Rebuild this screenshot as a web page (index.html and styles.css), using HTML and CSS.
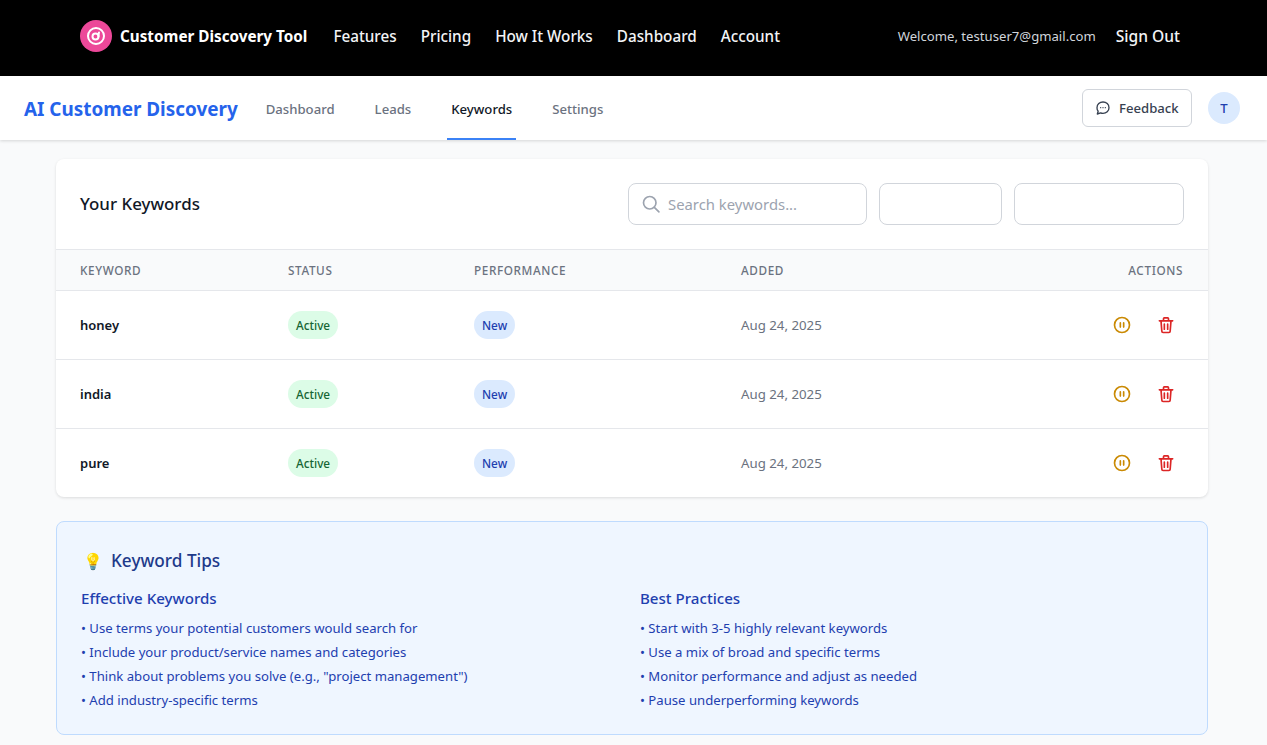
FILE: index.html
```html
<!DOCTYPE html>
<html lang="en">

<head>
    <meta charset="UTF-8" />
    <title>Keywords</title>
    <link rel="stylesheet" href="styles.css">
</head>

<body>
    <header class="site-bar">
        <div class="site-left">
            <a class="brand">
                <span class="brand-icon">
                    <svg width="24" height="24" viewBox="0 0 24 24" fill="none" stroke="#fff" stroke-width="2" stroke-linecap="round">
                        <circle cx="12" cy="12" r="8" />
                        <circle cx="11.500" cy="12.500" r="3" />
                        <path d="M14.500 12.500c0-1.500.2-3 .5-4" />
                    </svg>
                </span>
                Customer Discovery Tool
            </a>
            <nav class="site-nav">
                <a>Features</a>
                <a>Pricing</a>
                <a>How It Works</a>
                <a>Dashboard</a>
                <a>Account</a>
            </nav>
        </div>
        <div class="site-right">
            <span class="welcome">Welcome, testuser7@gmail.com</span>
            <a class="sign-out">Sign Out</a>
        </div>
    </header>

    <div class="app-bar">
        <div class="app-left">
            <h1 class="app-title">AI Customer Discovery</h1>
            <nav class="app-tabs">
                <a class="tab">Dashboard</a>
                <a class="tab">Leads</a>
                <a class="tab tab-active">Keywords</a>
                <a class="tab">Settings</a>
            </nav>
        </div>
        <div class="app-right">
            <button class="feedback" type="button">
                <svg width="16" height="16" viewBox="0 0 24 24" fill="none" stroke="#374151" stroke-width="2" stroke-linecap="round" stroke-linejoin="round">
                    <path d="M12 3c5 0 9 3.600 9 8.500S17 20 12 20c-1.300 0-2.500-.2-3.600-.7L3.500 21l1.200-4.200A8 8 0 0 1 3 11.500C3 6.600 7 3 12 3z" />
                    <path d="M8.500 11.500h.01M12 11.500h.01M15.500 11.500h.01" />
                </svg>
                Feedback
            </button>
            <span class="avatar">T</span>
        </div>
    </div>

    <main class="content">
        <section class="card">
            <div class="card-head">
                <h2 class="card-title">Your Keywords</h2>
                <div class="filters">
                    <label class="search">
                        <svg width="20" height="20" viewBox="0 0 24 24" fill="none" stroke="#9ca3af" stroke-width="2" stroke-linecap="round">
                            <circle cx="10.500" cy="10.500" r="7.500" />
                            <path d="M16 16l5.500 5.500" />
                        </svg>
                        <input type="text" placeholder="Search keywords..." />
                    </label>
                    <div class="select-box select-status"></div>
                    <div class="select-box select-sort"></div>
                </div>
            </div>
            <table class="kw-table">
                <colgroup>
                    <col class="col-keyword">
                    <col class="col-status">
                    <col class="col-perf">
                    <col class="col-added">
                    <col>
                </colgroup>
                <thead>
                    <tr>
                        <th>Keyword</th>
                        <th>Status</th>
                        <th>Performance</th>
                        <th>Added</th>
                        <th class="th-actions">Actions</th>
                    </tr>
                </thead>
                <tbody>
                    <tr>
                        <td class="kw-name">honey</td>
                        <td><span class="pill pill-green">Active</span></td>
                        <td><span class="pill pill-blue">New</span></td>
                        <td class="kw-date">Aug 24, 2025</td>
                        <td class="kw-actions">
                            <button class="icon-btn" type="button">
                                <svg width="20" height="20" viewBox="0 0 24 24" fill="none" stroke="#ca8a04" stroke-width="2" stroke-linecap="round"><circle cx="12" cy="12" r="9" /><path d="M10 9.500v5M14 9.500v5" /></svg>
                            </button>
                            <button class="icon-btn" type="button">
                                <svg width="20" height="20" viewBox="0 0 24 24" fill="none" stroke="#dc2626" stroke-width="2" stroke-linecap="round" stroke-linejoin="round"><path d="M4 7h16M9 7V4.500A1 1 0 0 1 10 3.500h4a1 1 0 0 1 1 1V7M6 7l1 12.500A1.500 1.500 0 0 0 8.500 21h7a1.500 1.500 0 0 0 1.500-1.500L18 7M10 11v6M14 11v6" /></svg>
                            </button>
                        </td>
                    </tr>
                    <tr>
                        <td class="kw-name">india</td>
                        <td><span class="pill pill-green">Active</span></td>
                        <td><span class="pill pill-blue">New</span></td>
                        <td class="kw-date">Aug 24, 2025</td>
                        <td class="kw-actions">
                            <button class="icon-btn" type="button">
                                <svg width="20" height="20" viewBox="0 0 24 24" fill="none" stroke="#ca8a04" stroke-width="2" stroke-linecap="round"><circle cx="12" cy="12" r="9" /><path d="M10 9.500v5M14 9.500v5" /></svg>
                            </button>
                            <button class="icon-btn" type="button">
                                <svg width="20" height="20" viewBox="0 0 24 24" fill="none" stroke="#dc2626" stroke-width="2" stroke-linecap="round" stroke-linejoin="round"><path d="M4 7h16M9 7V4.500A1 1 0 0 1 10 3.500h4a1 1 0 0 1 1 1V7M6 7l1 12.500A1.500 1.500 0 0 0 8.500 21h7a1.500 1.500 0 0 0 1.500-1.500L18 7M10 11v6M14 11v6" /></svg>
                            </button>
                        </td>
                    </tr>
                    <tr>
                        <td class="kw-name">pure</td>
                        <td><span class="pill pill-green">Active</span></td>
                        <td><span class="pill pill-blue">New</span></td>
                        <td class="kw-date">Aug 24, 2025</td>
                        <td class="kw-actions">
                            <button class="icon-btn" type="button">
                                <svg width="20" height="20" viewBox="0 0 24 24" fill="none" stroke="#ca8a04" stroke-width="2" stroke-linecap="round"><circle cx="12" cy="12" r="9" /><path d="M10 9.500v5M14 9.500v5" /></svg>
                            </button>
                            <button class="icon-btn" type="button">
                                <svg width="20" height="20" viewBox="0 0 24 24" fill="none" stroke="#dc2626" stroke-width="2" stroke-linecap="round" stroke-linejoin="round"><path d="M4 7h16M9 7V4.500A1 1 0 0 1 10 3.500h4a1 1 0 0 1 1 1V7M6 7l1 12.500A1.500 1.500 0 0 0 8.500 21h7a1.500 1.500 0 0 0 1.500-1.500L18 7M10 11v6M14 11v6" /></svg>
                            </button>
                        </td>
                    </tr>
                </tbody>
            </table>
        </section>

        <section class="tips">
            <h3 class="tips-title"><span class="tips-emoji">💡</span>Keyword Tips</h3>
            <div class="tips-grid">
                <div>
                    <h4 class="tips-sub">Effective Keywords</h4>
                    <ul class="tips-list">
                        <li>• Use terms your potential customers would search for</li>
                        <li>• Include your product/service names and categories</li>
                        <li>• Think about problems you solve (e.g., "project management")</li>
                        <li>• Add industry-specific terms</li>
                    </ul>
                </div>
                <div>
                    <h4 class="tips-sub">Best Practices</h4>
                    <ul class="tips-list">
                        <li>• Start with 3-5 highly relevant keywords</li>
                        <li>• Use a mix of broad and specific terms</li>
                        <li>• Monitor performance and adjust as needed</li>
                        <li>• Pause underperforming keywords</li>
                    </ul>
                </div>
            </div>
        </section>
    </main>
</body>

</html>
```

FILE: styles.css
```css
* {
    box-sizing: border-box;
}

body {
    margin: 0;
    background-color: #f9fafb;
    color: #111827;
    font-family: "Noto Sans", "Liberation Sans", sans-serif;
    font-size: 13.15px;
}

h1,
h2,
h3,
h4,
ul {
    margin: 0;
    padding: 0;
}

/* top black bar */
.site-bar {
    display: flex;
    justify-content: space-between;
    align-items: center;
    height: 76px;
    padding: 0 87px 4px 80px;
    background-color: #000;
    color: #fff;
}

.site-left,
.site-right,
.brand,
.site-nav {
    display: flex;
    align-items: center;
}

.brand {
    gap: 8px;
    margin-right: 26px;
    font-size: 15.25px;
    font-weight: 700;
}

.brand-icon {
    display: flex;
    align-items: center;
    justify-content: center;
    width: 32px;
    height: 32px;
    border-radius: 50%;
    background-color: #ec4899;
}

.site-nav {
    gap: 24px;
    font-size: 15.25px;
    font-weight: 500;
    color: #f3f4f6;
}

.site-right {
    gap: 20px;
}

.welcome {
    font-size: 13.15px;
    color: #d1d5db;
}

.sign-out {
    font-size: 15.6px;
    font-weight: 500;
    color: #f3f4f6;
}

/* white app bar */
.app-bar {
    display: flex;
    justify-content: space-between;
    align-items: center;
    height: 64px;
    padding: 0 27px 0 24px;
    background-color: #fff;
    box-shadow: 0 1px 3px rgba(0, 0, 0, 0.15);
}

.app-left,
.app-right,
.app-tabs {
    display: flex;
    align-items: center;
}

.app-left,
.app-tabs {
    height: 100%;
}

.app-title {
    margin-right: 24px;
    padding-top: 2px;
    font-size: 18.9px;
    font-weight: 700;
    color: #2563eb;
}

.tab {
    display: flex;
    align-items: center;
    height: 100%;
    padding: 3px 4px 0;
    margin-right: 32px;
    border-bottom: 2px solid transparent;
    font-size: 13.15px;
    font-weight: 500;
    color: #6b7280;
}

.tab-active {
    border-bottom-color: #3b82f6;
    color: #111827;
}

.app-right {
    gap: 16px;
}

.feedback {
    display: flex;
    align-items: center;
    gap: 8px;
    width: 110px;
    height: 38px;
    padding: 0 12px;
    border: 1px solid #d1d5db;
    border-radius: 6px;
    background-color: #fff;
    font-family: inherit;
    font-size: 13.15px;
    font-weight: 500;
    color: #374151;
}

.feedback svg,
.search svg {
    flex: none;
}

.avatar {
    display: flex;
    align-items: center;
    justify-content: center;
    width: 32px;
    height: 32px;
    border-radius: 50%;
    background-color: #dbeafe;
    font-size: 13.15px;
    font-weight: 500;
    color: #1e40af;
}

/* main content */
.content {
    width: 1152px;
    margin-left: 56px;
    padding-top: 19px;
    padding-bottom: 24px;
}

.card {
    overflow: hidden;
    border-radius: 8px;
    background-color: #fff;
    box-shadow: 0 1px 3px rgba(0, 0, 0, 0.12);
}

.card-head {
    display: flex;
    justify-content: space-between;
    align-items: center;
    height: 90px;
    padding: 0 24px;
}

.card-title {
    margin-bottom: 2px;
    font-size: 16.9px;
    font-weight: 500;
    color: #111827;
}

.filters {
    display: flex;
    gap: 12px;
}

.search {
    display: flex;
    align-items: center;
    gap: 7px;
    width: 239px;
    height: 42px;
    padding: 0 12px;
    border: 1px solid #d1d5db;
    border-radius: 8px;
}

.search input {
    width: 100%;
    border: none;
    outline: none;
    padding: 0;
    font-family: inherit;
    font-size: 14.85px;
    color: #111827;
}

.search input::placeholder {
    color: #9ca3af;
}

.select-box {
    height: 42px;
    border: 1px solid #d1d5db;
    border-radius: 8px;
    background-color: #fff;
}

.select-status {
    width: 123px;
}

.select-sort {
    width: 170px;
}

.kw-table {
    width: 100%;
    border-collapse: collapse;
    table-layout: fixed;
}

.col-keyword {
    width: 232px;
}

.col-status {
    width: 186px;
}

.col-perf {
    width: 267px;
}

.col-added {
    width: 267px;
}

.kw-table th {
    height: 41px;
    padding: 0 24px 0 0;
    border-top: 1px solid #e5e7eb;
    border-bottom: 1px solid #e5e7eb;
    background-color: #f9fafb;
    text-align: left;
    font-size: 11.75px;
    font-weight: 500;
    letter-spacing: 0.6px;
    text-transform: uppercase;
    color: #6b7280;
}

.kw-table th:first-child,
.kw-table td:first-child {
    padding-left: 24px;
}

.kw-table th.th-actions {
    padding-right: 25px;
    text-align: right;
}

.kw-table td {
    height: 69px;
    padding: 0 24px 0 0;
    border-bottom: 1px solid #e5e7eb;
}

.kw-table tr:last-child td {
    height: 68px;
    border-bottom: none;
}

.kw-name {
    font-size: 13px;
    font-weight: 600;
    color: #111827;
}

.kw-date {
    font-size: 13.25px;
    color: #6b7280;
}

.pill {
    display: inline-block;
    height: 28px;
    padding: 0 8px;
    border-radius: 14px;
    font-size: 11.75px;
    font-weight: 500;
    line-height: 28px;
    vertical-align: middle;
}

.pill-green {
    background-color: #dcfce7;
    color: #166534;
}

.pill-blue {
    background-color: #dbeafe;
    color: #1e40af;
}

.kw-actions {
    text-align: right;
}

.icon-btn {
    display: inline-flex;
    margin-left: 21px;
    padding: 0;
    border: none;
    background: none;
    vertical-align: middle;
}

.kw-actions .icon-btn:last-child {
    margin-right: 8px;
}

/* tips box */
.tips {
    height: 214px;
    margin-top: 24px;
    padding: 24px;
    border: 1px solid #bfdbfe;
    border-radius: 8px;
    background-color: #eff6ff;
}

.tips-title {
    display: flex;
    align-items: center;
    gap: 8px;
    height: 28px;
    margin-top: 1px;
    font-size: 17.2px;
    font-weight: 500;
    color: #1e3a8a;
}

.tips-emoji {
    margin-left: 2px;
    font-size: 16px;
}

.tips-grid {
    display: grid;
    grid-template-columns: 1fr 1fr;
    gap: 16px;
    margin-top: 12px;
}

.tips-sub {
    margin-bottom: 7px;
    font-size: 15.1px;
    line-height: 22px;
    font-weight: 500;
    color: #1e40af;
}

.tips-list {
    list-style: none;
    font-size: 13.15px;
    line-height: 24px;
    color: #1e40af;
}
```
